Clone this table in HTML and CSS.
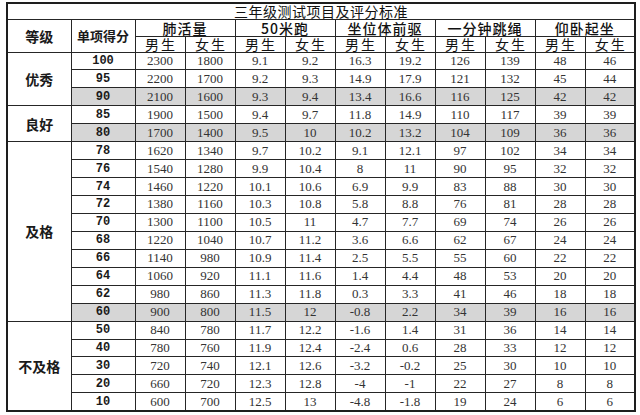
FILE: index.html
```html
<!DOCTYPE html>
<html lang="zh">
<head>
<meta charset="utf-8">
<title>三年级测试项目及评分标准</title>
<link rel="stylesheet" href="styles.css">
</head>
<body>
<div class="sheet">
<table class="score-table">
<colgroup>
<col class="c-grade"><col class="c-score">
<col class="c-val"><col class="c-val"><col class="c-val"><col class="c-val"><col class="c-val">
<col class="c-val"><col class="c-val"><col class="c-val"><col class="c-val"><col class="c-val">
</colgroup>
<thead>
<tr class="r-title"><th colspan="12" class="title">三年级测试项目及评分标准</th></tr>
<tr class="r-h1">
<th rowspan="2" class="h-grade">等级</th>
<th rowspan="2" class="h-score">单项得分</th>
<th colspan="2" class="h-item">肺活量</th>
<th colspan="2" class="h-item">50米跑</th>
<th colspan="2" class="h-item">坐位体前驱</th>
<th colspan="2" class="h-item">一分钟跳绳</th>
<th colspan="2" class="h-item">仰卧起坐</th>
</tr>
<tr class="r-h2">
<th class="h-sex">男生</th><th class="h-sex">女生</th>
<th class="h-sex">男生</th><th class="h-sex">女生</th>
<th class="h-sex">男生</th><th class="h-sex">女生</th>
<th class="h-sex">男生</th><th class="h-sex">女生</th>
<th class="h-sex">男生</th><th class="h-sex">女生</th>
</tr>
</thead>
<tbody>
<tr><th rowspan="3" class="grade">优秀</th><td class="score">100</td><td>2300</td><td>1800</td><td>9.1</td><td>9.2</td><td>16.3</td><td>19.2</td><td>126</td><td>139</td><td>48</td><td>46</td></tr>
<tr><td class="score">95</td><td>2200</td><td>1700</td><td>9.2</td><td>9.3</td><td>14.9</td><td>17.9</td><td>121</td><td>132</td><td>45</td><td>44</td></tr>
<tr class="shade"><td class="score">90</td><td>2100</td><td>1600</td><td>9.3</td><td>9.4</td><td>13.4</td><td>16.6</td><td>116</td><td>125</td><td>42</td><td>42</td></tr>
<tr><th rowspan="2" class="grade">良好</th><td class="score">85</td><td>1900</td><td>1500</td><td>9.4</td><td>9.7</td><td>11.8</td><td>14.9</td><td>110</td><td>117</td><td>39</td><td>39</td></tr>
<tr class="shade"><td class="score">80</td><td>1700</td><td>1400</td><td>9.5</td><td>10</td><td>10.2</td><td>13.2</td><td>104</td><td>109</td><td>36</td><td>36</td></tr>
<tr><th rowspan="10" class="grade">及格</th><td class="score">78</td><td>1620</td><td>1340</td><td>9.7</td><td>10.2</td><td>9.1</td><td>12.1</td><td>97</td><td>102</td><td>34</td><td>34</td></tr>
<tr><td class="score">76</td><td>1540</td><td>1280</td><td>9.9</td><td>10.4</td><td>8</td><td>11</td><td>90</td><td>95</td><td>32</td><td>32</td></tr>
<tr><td class="score">74</td><td>1460</td><td>1220</td><td>10.1</td><td>10.6</td><td>6.9</td><td>9.9</td><td>83</td><td>88</td><td>30</td><td>30</td></tr>
<tr><td class="score">72</td><td>1380</td><td>1160</td><td>10.3</td><td>10.8</td><td>5.8</td><td>8.8</td><td>76</td><td>81</td><td>28</td><td>28</td></tr>
<tr><td class="score">70</td><td>1300</td><td>1100</td><td>10.5</td><td>11</td><td>4.7</td><td>7.7</td><td>69</td><td>74</td><td>26</td><td>26</td></tr>
<tr><td class="score">68</td><td>1220</td><td>1040</td><td>10.7</td><td>11.2</td><td>3.6</td><td>6.6</td><td>62</td><td>67</td><td>24</td><td>24</td></tr>
<tr><td class="score">66</td><td>1140</td><td>980</td><td>10.9</td><td>11.4</td><td>2.5</td><td>5.5</td><td>55</td><td>60</td><td>22</td><td>22</td></tr>
<tr><td class="score">64</td><td>1060</td><td>920</td><td>11.1</td><td>11.6</td><td>1.4</td><td>4.4</td><td>48</td><td>53</td><td>20</td><td>20</td></tr>
<tr><td class="score">62</td><td>980</td><td>860</td><td>11.3</td><td>11.8</td><td>0.3</td><td>3.3</td><td>41</td><td>46</td><td>18</td><td>18</td></tr>
<tr class="shade"><td class="score">60</td><td>900</td><td>800</td><td>11.5</td><td>12</td><td>-0.8</td><td>2.2</td><td>34</td><td>39</td><td>16</td><td>16</td></tr>
<tr><th rowspan="5" class="grade">不及格</th><td class="score">50</td><td>840</td><td>780</td><td>11.7</td><td>12.2</td><td>-1.6</td><td>1.4</td><td>31</td><td>36</td><td>14</td><td>14</td></tr>
<tr><td class="score">40</td><td>780</td><td>760</td><td>11.9</td><td>12.4</td><td>-2.4</td><td>0.6</td><td>28</td><td>33</td><td>12</td><td>12</td></tr>
<tr><td class="score">30</td><td>720</td><td>740</td><td>12.1</td><td>12.6</td><td>-3.2</td><td>-0.2</td><td>25</td><td>30</td><td>10</td><td>10</td></tr>
<tr><td class="score">20</td><td>660</td><td>720</td><td>12.3</td><td>12.8</td><td>-4</td><td>-1</td><td>22</td><td>27</td><td>8</td><td>8</td></tr>
<tr><td class="score">10</td><td>600</td><td>700</td><td>12.5</td><td>13</td><td>-4.8</td><td>-1.8</td><td>19</td><td>24</td><td>6</td><td>6</td></tr>
</tbody>
</table>
</div>
</body>
</html>
```
FILE: styles.css
```css
html, body {
  margin: 0;
  padding: 0;
  background: #ffffff;
}

.sheet {
  padding: 2px 0 0 6px;
}

.score-table {
  width: 629px;
  table-layout: fixed;
  border-collapse: collapse;
  border: 2px solid #1e1e1e;
  font-family: "Liberation Serif", "Noto Sans CJK SC", serif;
  color: #333333;
}

.c-grade { width: 64px; }
.c-score { width: 64px; }
.c-val { width: 50px; }

.score-table th,
.score-table td {
  border: 1px solid #262626;
  padding: 0;
  text-align: center;
  vertical-align: middle;
  white-space: nowrap;
}

.r-title { height: 16px; }
.r-h1 { height: 17px; }
.r-h2 { height: 16px; }
.score-table tbody tr { height: 17.95px; }

.title {
  font-family: "Noto Sans CJK SC", sans-serif;
  font-weight: 400;
  font-size: 14px;
  letter-spacing: 0.5px;
  line-height: 12px;
  color: #111111;
}

.h-grade,
.h-score,
.grade {
  font-family: "Noto Sans CJK SC", sans-serif;
  font-weight: 700;
  color: #1a1a1a;
  line-height: 12px;
}

.h-grade { font-size: 14px; }
.h-score { font-size: 13px; }
.grade { font-size: 14px; }

.h-item {
  font-family: "Noto Sans CJK SC", sans-serif;
  font-weight: 500;
  font-size: 14px;
  letter-spacing: 1px;
  line-height: 12px;
  color: #111111;
}

.h-sex {
  font-family: "Noto Sans CJK SC", sans-serif;
  font-weight: 400;
  font-size: 14px;
  letter-spacing: 2px;
  text-indent: 2px;
  line-height: 12px;
  color: #111111;
}

.score-table td {
  font-size: 13px;
  line-height: 14px;
}

.score-table td.score {
  font-family: "Liberation Mono", monospace;
  font-weight: 700;
  font-size: 12px;
  color: #1a1a1a;
}

.shade td {
  background: #d6d6d6;
}
```
